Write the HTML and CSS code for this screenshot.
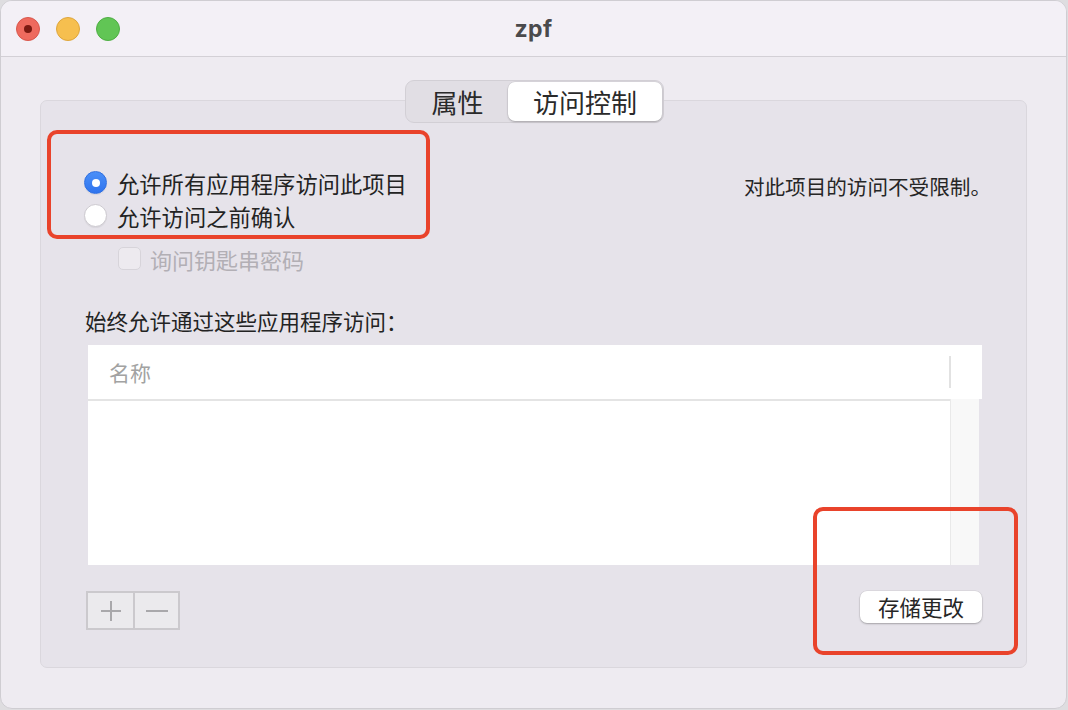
FILE: index.html
```html
<!DOCTYPE html>
<html lang="zh-CN">
<head>
<meta charset="utf-8">
<title>zpf</title>
<link rel="stylesheet" href="styles.css">
</head>
<body>
<div class="window">
  <header class="titlebar">
    <div class="lights">
      <span class="light red"><span class="dot"></span></span>
      <span class="light yellow"></span>
      <span class="light green"></span>
    </div>
    <div class="title">zpf</div>
    <div class="spacer"></div>
  </header>
  <main class="content">
    <div class="tabs">
      <div class="tab">属性</div>
      <div class="tab selected">访问控制</div>
    </div>
    <section class="panel">
      <div class="top-row">
        <div class="options">
          <label class="option"><span class="radio on"></span><span>允许所有应用程序访问此项目</span></label>
          <label class="option"><span class="radio"></span><span>允许访问之前确认</span></label>
        </div>
        <div class="status">对此项目的访问不受限制。</div>
      </div>
      <label class="check-row"><span class="checkbox"></span><span>询问钥匙串密码</span></label>
      <div class="list-label">始终允许通过这些应用程序访问：</div>
      <div class="table">
        <div class="thead">
          <div class="th">名称</div>
          <div class="th-divider"></div>
          <div class="th-end"></div>
        </div>
        <div class="tbody">
          <div class="rows"></div>
          <div class="track"></div>
        </div>
      </div>
      <div class="bottom-row">
        <div class="pm">
          <span class="pm-btn"><svg width="22" height="22" viewBox="0 0 22 22"><path d="M11 1v20M1 11h20" stroke="#a9a8ab" stroke-width="2" fill="none"/></svg></span>
          <span class="pm-btn"><svg width="22" height="22" viewBox="0 0 22 22"><path d="M0 11h22" stroke="#a9a8ab" stroke-width="2" fill="none"/></svg></span>
        </div>
        <button class="save">存储更改</button>
      </div>
      <div class="mark mark-a"></div>
      <div class="mark mark-b"></div>
    </section>
  </main>
</div>
</body>
</html>
```
FILE: styles.css
```css
* { box-sizing: border-box; }
html, body { margin: 0; padding: 0; }
body {
  background: #dedde0;
  font-family: "Noto Sans CJK SC", "Noto Sans", sans-serif;
  color: #262626;
  width: 1068px;
  height: 710px;
  overflow: hidden;
}
.window {
  width: 1067px;
  height: 709px;
  background: #eeebf1;
  border-radius: 12px;
  border: 1px solid #cfcdd2;
  overflow: hidden;
}
.titlebar {
  height: 56px;
  background: #f3f0f6;
  border-bottom: 1px solid #d3d0d6;
  display: grid;
  grid-template-columns: 1fr auto 1fr;
  align-items: center;
}
.lights {
  display: flex;
  gap: 16px;
  padding-left: 15px;
}
.light {
  width: 24px;
  height: 24px;
  border-radius: 50%;
  display: flex;
  align-items: center;
  justify-content: center;
}
.red { background: #ee6a5e; border: 1px solid #d9574c; }
.yellow { background: #f6bf4f; border: 1px solid #dea63c; }
.green { background: #61c555; border: 1px solid #4eae43; }
.dot { width: 8px; height: 8px; border-radius: 50%; background: #7b1a12; }
.title {
  font-family: Inter, "Liberation Sans", sans-serif;
  font-weight: 700;
  font-size: 23px;
  color: #4a4a4c;
  letter-spacing: 0.4px;
}
.content {
  padding: 23px 39px 0 39px;
  display: flex;
  flex-direction: column;
  align-items: center;
}
.tabs {
  position: relative;
  z-index: 1;
  display: flex;
  height: 43px;
  padding: 1px;
  background: #e1dee4;
  border: 1px solid #d2cfd5;
  border-radius: 9px;
  margin-left: 2px;
}
.tab {
  display: flex;
  align-items: center;
  justify-content: center;
  font-size: 26px;
  color: #2a2a2a;
  width: 101px;
  border-radius: 7px;
}
.tab.selected {
  width: 154px;
  background: #ffffff;
  box-shadow: 0 1px 2px rgba(0,0,0,0.22), 0 0 0 0.5px rgba(0,0,0,0.08);
}
.panel {
  position: relative;
  align-self: stretch;
  margin-top: -23px;
  background: #e6e3ea;
  border: 1px solid #dad7dd;
  border-radius: 7px;
  padding: 65px 44px 37px 43px;
  display: flex;
  flex-direction: column;
}
.top-row {
  display: flex;
  justify-content: space-between;
  align-items: flex-start;
}
.options { display: flex; flex-direction: column; }
.option {
  display: flex;
  align-items: center;
  height: 33px;
  gap: 10px;
  font-size: 22.3px;
  color: #232323;
}
.radio {
  width: 23px;
  height: 23px;
  border-radius: 50%;
  background: #ffffff;
  border: 1px solid #cdcad0;
  box-shadow: 0 1px 1px rgba(0,0,0,0.06);
  display: flex;
  align-items: center;
  justify-content: center;
}
.radio.on {
  background: linear-gradient(#4a8ff8, #2f74ee);
  border-color: #2f6fe0;
}
.radio.on::after {
  content: "";
  width: 8px;
  height: 8px;
  border-radius: 50%;
  background: #ffffff;
}
.status {
  font-size: 20.6px;
  line-height: 33px;
  margin-top: 4px;
  margin-right: -9px;
  color: #262626;
}
.check-row {
  display: flex;
  align-items: center;
  height: 33px;
  gap: 9px;
  margin-top: 10px;
  margin-left: 34px;
  font-size: 22px;
  color: #b2afb5;
}
.checkbox {
  width: 23px;
  height: 23px;
  border-radius: 5px;
  background: #edeaef;
  border: 1px solid #d7d4da;
}
.list-label {
  font-size: 21.5px;
  line-height: 30px;
  margin-top: 31px;
  margin-left: 1px;
  color: #232323;
}
.table {
  margin-top: 9px;
  margin-left: 4px;
  display: flex;
  flex-direction: column;
}
.thead {
  height: 54px;
  background: #ffffff;
  display: flex;
  align-items: center;
}
.th {
  flex: 1;
  padding-left: 21px;
  font-size: 21px;
  color: #a2a2a2;
}
.th-divider {
  width: 2px;
  height: 32px;
  background: #e2e2e2;
}
.th-end { width: 31px; }
.tbody {
  display: flex;
  height: 166px;
}
.rows {
  flex: 1;
  background: #ffffff;
  border-top: 2px solid #e4e4e4;
}
.track {
  width: 29px;
  margin-right: 3px;
  background: #f8f8f8;
  border-left: 1px solid #e9e9e9;
}
.bottom-row {
  margin-top: 26px;
  display: flex;
  justify-content: space-between;
  align-items: flex-start;
}
.pm {
  display: flex;
  margin-left: 2px;
  height: 39px;
  border: 2px solid #cbc9cd;
  background: #ebeaed;
}
.pm-btn {
  width: 45px;
  display: flex;
  align-items: center;
  justify-content: center;
}
.pm-btn + .pm-btn { border-left: 2px solid #cbc9cd; }
.save {
  width: 122px;
  height: 32px;
  border: none;
  border-radius: 7px;
  background: #ffffff;
  box-shadow: 0 1px 2px rgba(0,0,0,0.25), 0 0 0 0.5px rgba(0,0,0,0.08);
  font-family: "Noto Sans CJK SC", "Noto Sans", sans-serif;
  font-size: 21.5px;
  color: #262626;
  padding: 0;
  line-height: 32px;
}
.mark {
  position: absolute;
  border: 4px solid #e9432b;
  border-radius: 10px;
}
.mark-a { left: 6px; top: 29px; width: 383px; height: 109px; }
.mark-b { left: 772px; top: 406px; width: 205px; height: 148px; }
```
